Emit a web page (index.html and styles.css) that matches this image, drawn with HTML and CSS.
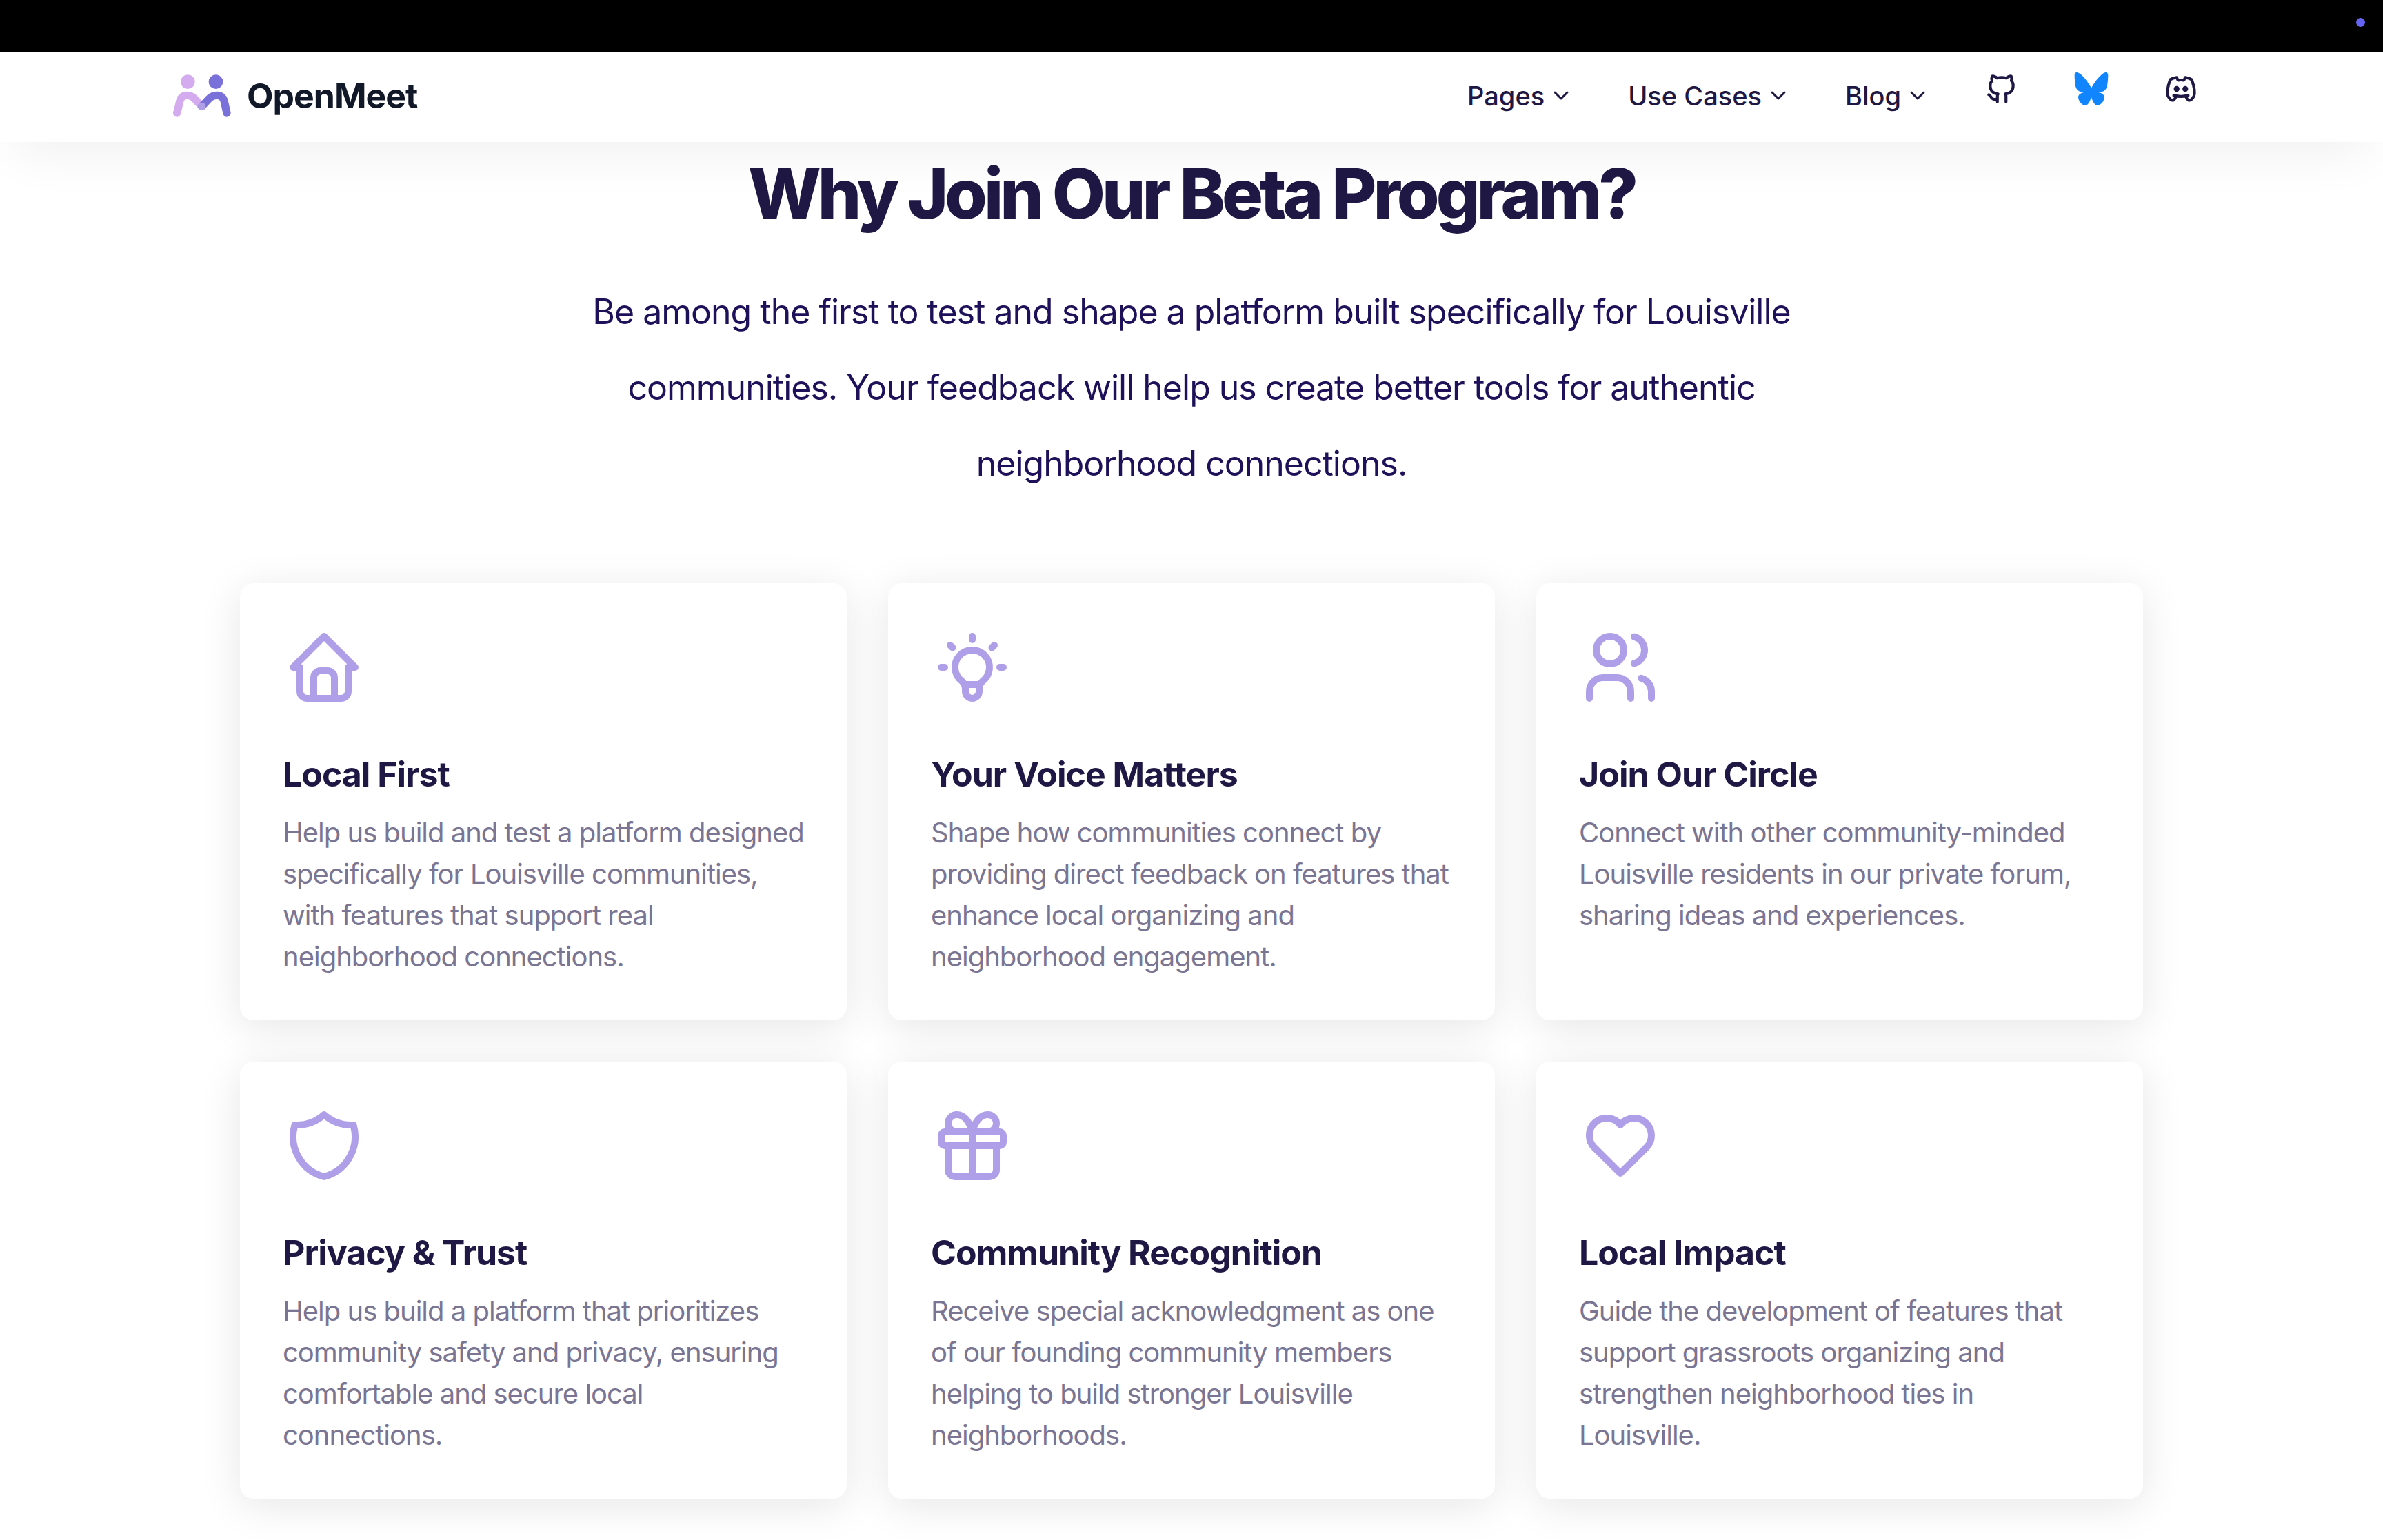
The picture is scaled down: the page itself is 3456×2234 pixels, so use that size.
FILE: index.html
```html
<!DOCTYPE html>
<html lang="en">
<head>
<meta charset="utf-8">
<meta name="viewport" content="width=device-width, initial-scale=1">
<title>OpenMeet</title>
<link rel="stylesheet" href="styles.css">
</head>
<body>
<div class="system-bar"><span class="status-dot"></span></div>

<header class="site-header">
  <div class="header-inner">
    <a class="brand" href="#">
      <svg class="brand-mark" viewBox="0 0 252 186" aria-hidden="true">
        <circle cx="64" cy="32" r="31" fill="#d4abee"/>
        <circle cx="186" cy="32" r="31" fill="#7a70da"/>
        <g fill="none" stroke-width="34" stroke-linecap="round" stroke-linejoin="round">
          <path stroke="#d4abee" d="M17 168L30 114C38 86 74 83 96 108L125 139"/>
          <path stroke="#7a70da" d="M234 168L222 114C214 86 176 83 154 108L125 139"/>
        </g>
        <circle cx="125" cy="139" r="17" fill="#af9fe7"/>
      </svg>
      <span>OpenMeet</span>
    </a>
    <nav class="main-nav" aria-label="Main">
      <button class="nav-item" type="button">Pages
        <svg class="chevron" viewBox="0 0 20 12" aria-hidden="true"><path d="M1 1l9 9l9 -9"/></svg>
      </button>
      <button class="nav-item" type="button">Use Cases
        <svg class="chevron" viewBox="0 0 20 12" aria-hidden="true"><path d="M1 1l9 9l9 -9"/></svg>
      </button>
      <button class="nav-item" type="button">Blog
        <svg class="chevron" viewBox="0 0 20 12" aria-hidden="true"><path d="M1 1l9 9l9 -9"/></svg>
      </button>
      <div class="social">
        <a href="#" aria-label="GitHub">
          <svg class="social-icon" viewBox="0 0 24 24"><path d="M9 19c-4.3 1.4 -4.3 -2.5 -6 -3m12 5v-3.5c0 -1 .1 -1.4 -.5 -2c2.8 -.3 5.5 -1.4 5.5 -6a4.6 4.6 0 0 0 -1.3 -3.2a4.2 4.2 0 0 0 -.1 -3.2s-1.1 -.3 -3.5 1.3a12.3 12.3 0 0 0 -6.2 0c-2.4 -1.6 -3.5 -1.3 -3.5 -1.3a4.2 4.2 0 0 0 -.1 3.2a4.6 4.6 0 0 0 -1.3 3.2c0 4.6 2.7 5.7 5.5 6c-.6 .6 -.6 1.2 -.5 2v3.5"/></svg>
        </a>
        <a href="#" aria-label="Bluesky">
          <svg class="social-icon bluesky" viewBox="-2 -2 150 150"><path d="M73 69C60 44 34 9 14 2C5 -1 0 4 0 14C0 24 2 50 4 60C8 78 20 87 42 88C28 90 16 97 16 110C17 128 34 145 46 145C60 144 68 125 73 109C78 125 86 144 100 145C112 145 129 128 130 110C130 97 118 90 104 88C126 87 138 78 142 60C144 50 146 24 146 14C146 4 141 -1 132 2C112 9 86 44 73 69Z"/></svg>
        </a>
        <a href="#" aria-label="Discord">
          <svg class="social-icon" viewBox="0 0 24 24"><path d="M8 12a1 1 0 1 0 2 0a1 1 0 0 0 -2 0M14 12a1 1 0 1 0 2 0a1 1 0 0 0 -2 0M15.5 17c0 1 1.5 3 2 3c1.5 0 2.833 -1.667 3.5 -3c.667 -1.667 .5 -5.833 -1.5 -11.5c-1.457 -1.015 -3 -1.34 -4.5 -1.5l-.972 1.923a11.913 11.913 0 0 0 -4.053 0l-.975 -1.923c-1.5 .16 -3.043 .485 -4.5 1.5c-2 5.667 -2.167 9.833 -1.5 11.5c.667 1.333 2 3 3.5 3c.5 0 2 -2 2 -3M7 16.5c3.5 1 6.5 1 10 0"/></svg>
        </a>
      </div>
    </nav>
  </div>
</header>

<main class="beta">
  <div class="intro">
    <h1 class="intro-title">Why Join Our Beta Program?</h1>
    <p class="intro-text">Be among the first to test and shape a platform built specifically for Louisville communities. Your feedback will help us create better tools for authentic neighborhood connections.</p>
  </div>
  <div class="cards">
    <article class="card">
      <svg class="card-icon" viewBox="0 0 24 24" aria-hidden="true"><path d="M5 12l-2 0l9 -9l9 9l-2 0M5 12v7a2 2 0 0 0 2 2h10a2 2 0 0 0 2 -2v-7M9 21v-6a2 2 0 0 1 2 -2h2a2 2 0 0 1 2 2v6"/></svg>
      <h2 class="card-title">Local First</h2>
      <p class="card-text">Help us build and test a platform designed specifically for Louisville communities, with features that support real neighborhood connections.</p>
    </article>
    <article class="card">
      <svg class="card-icon" viewBox="0 0 24 24" aria-hidden="true"><path d="M3 12h1m8 -9v1m8 8h1m-15.4 -6.4l.7 .7m12.1 -.7l-.7 .7M9 16a5 5 0 1 1 6 0a3.5 3.5 0 0 0 -1 3a2 2 0 0 1 -4 0a3.5 3.5 0 0 0 -1 -3M9.7 17l4.6 0"/></svg>
      <h2 class="card-title">Your Voice Matters</h2>
      <p class="card-text">Shape how communities connect by providing direct feedback on features that enhance local organizing and neighborhood engagement.</p>
    </article>
    <article class="card">
      <svg class="card-icon" viewBox="0 0 24 24" aria-hidden="true"><path d="M5 7a4 4 0 1 0 8 0a4 4 0 1 0 -8 0M3 21v-2a4 4 0 0 1 4 -4h4a4 4 0 0 1 4 4v2M16 3.130a4 4 0 0 1 0 7.750M21 21v-2a4 4 0 0 0 -3 -3.850"/></svg>
      <h2 class="card-title">Join Our Circle</h2>
      <p class="card-text">Connect with other community-minded Louisville residents in our private forum, sharing ideas and experiences.</p>
    </article>
    <article class="card">
      <svg class="card-icon" viewBox="0 0 24 24" aria-hidden="true"><path d="M12 3a12 12 0 0 0 8.500 3a12 12 0 0 1 -8.500 15a12 12 0 0 1 -8.500 -15a12 12 0 0 0 8.500 -3"/></svg>
      <h2 class="card-title">Privacy &amp; Trust</h2>
      <p class="card-text">Help us build a platform that prioritizes community safety and privacy, ensuring comfortable and secure local connections.</p>
    </article>
    <article class="card">
      <svg class="card-icon" viewBox="0 0 24 24" aria-hidden="true"><path d="M3 9a1 1 0 0 1 1 -1h16a1 1 0 0 1 1 1v2a1 1 0 0 1 -1 1h-16a1 1 0 0 1 -1 -1zM12 8l0 13M19 12v7a2 2 0 0 1 -2 2h-10a2 2 0 0 1 -2 -2v-7M7.500 8a2.500 2.500 0 0 1 0 -5a4.800 8 0 0 1 4.500 5a4.800 8 0 0 1 4.500 -5a2.500 2.500 0 0 1 0 5"/></svg>
      <h2 class="card-title">Community Recognition</h2>
      <p class="card-text">Receive special acknowledgment as one of our founding community members helping to build stronger Louisville neighborhoods.</p>
    </article>
    <article class="card">
      <svg class="card-icon" viewBox="0 0 24 24" aria-hidden="true"><path d="M19.500 12.572l-7.500 7.428l-7.500 -7.428a5 5 0 1 1 7.500 -6.566a5 5 0 1 1 7.500 6.572"/></svg>
      <h2 class="card-title">Local Impact</h2>
      <p class="card-text">Guide the development of features that support grassroots organizing and strengthen neighborhood ties in Louisville.</p>
    </article>
  </div>
</main>
</body>
</html>
```

FILE: styles.css
```css
*,
*::before,
*::after {
  box-sizing: border-box;
}

body {
  margin: 0;
  background: #fff;
  color: #1f1844;
  font-family: Inter, "Liberation Sans", sans-serif;
  letter-spacing: -1px;
}

h1,
h2,
p {
  margin: 0;
}

svg {
  display: block;
}

.system-bar {
  display: flex;
  justify-content: flex-end;
  height: 75px;
  padding: 26px 26px 0 0;
  background: #000;
}

.status-dot {
  width: 13px;
  height: 13px;
  border-radius: 50%;
  background: #6563f1;
}

.site-header {
  position: sticky;
  top: 0;
  z-index: 2;
  background: #fff;
  box-shadow: 0 30px 80px -20px rgba(0, 0, 0, 0.07);
}

.header-inner {
  display: flex;
  align-items: center;
  justify-content: space-between;
  max-width: 3056px;
  height: 131px;
  margin: 0 auto;
  padding: 0 68px 4px 51px;
}

.brand {
  display: flex;
  align-items: center;
  gap: 23px;
  color: #111827;
  font-size: 50px;
  font-weight: 700;
  line-height: 60px;
  text-decoration: none;
}

.brand-mark {
  width: 84px;
  height: 62px;
}

.main-nav {
  display: flex;
  align-items: center;
  gap: 87px;
}

.nav-item {
  display: flex;
  align-items: center;
  gap: 14px;
  padding: 0;
  border: 0;
  background: none;
  color: inherit;
  font: 500 38px/60px Inter, "Liberation Sans", sans-serif;
  letter-spacing: normal;
  cursor: pointer;
}

.chevron {
  width: 20px;
  height: 12px;
  overflow: visible;
  fill: none;
  stroke: currentColor;
  stroke-width: 3;
  stroke-linecap: round;
  stroke-linejoin: round;
}

.social {
  display: flex;
  gap: 80px;
  padding-bottom: 20px;
}

.social a {
  color: inherit;
}

.social-icon {
  width: 50px;
  height: 50px;
  fill: none;
  stroke: currentColor;
  stroke-width: 2;
  stroke-linecap: round;
  stroke-linejoin: round;
}

.bluesky {
  fill: #1185fe;
  stroke: none;
}

.beta {
  max-width: 2880px;
  margin: 0 auto;
  padding: 25px 60px 60px;
}

.intro {
  max-width: 1800px;
  margin: 0 auto 119px;
  text-align: center;
}

.intro-title {
  margin-bottom: 66px;
  font-size: 100px;
  font-weight: 800;
  line-height: 100px;
  letter-spacing: -5px;
}

.intro-text {
  color: #1e1159;
  font-size: 50px;
  line-height: 110px;
}

.cards {
  display: grid;
  grid-template-columns: repeat(3, 1fr);
  gap: 60px;
}

.card {
  padding: 60px;
  border: 2px solid #fff;
  border-radius: 20px;
  background: #fff;
  box-shadow: 0 10px 60px rgba(0, 0, 0, 0.1);
}

.card-icon {
  width: 120px;
  height: 120px;
  margin-bottom: 65px;
  fill: none;
  stroke: #ae9fe8;
  stroke-width: 2;
  stroke-linecap: round;
  stroke-linejoin: round;
}

.card-title {
  margin-bottom: 25px;
  font-size: 50px;
  font-weight: 700;
  line-height: 60px;
}

.card-text {
  color: #7a7592;
  font-size: 40px;
  line-height: 60px;
}
```
